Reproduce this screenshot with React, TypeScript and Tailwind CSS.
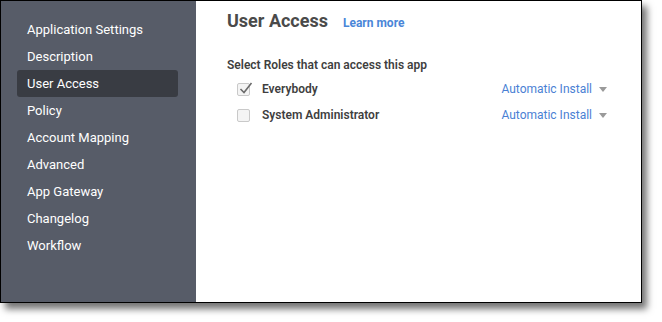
const items = [
  'Application Settings',
  'Description',
  'User Access',
  'Policy',
  'Account Mapping',
  'Advanced',
  'App Gateway',
  'Changelog',
  'Workflow',
];

const roles = [
  { name: 'Everybody', checked: true },
  { name: 'System Administrator', checked: false },
];

function Checkbox({ checked }: { checked: boolean }) {
  return (
    <span className="relative flex h-[13px] w-[13px] items-center justify-center rounded-[2px] border border-[#c9c9c9] bg-[#f4f4f4]">
      {checked && (
        <svg className="absolute -top-[3px] left-[1px]" width="14" height="14" viewBox="0 0 14 14">
          <path d="M1.5 8 L5 11.5 L12.5 2" fill="none" stroke="#6b6b6b" strokeWidth="1.6" />
        </svg>
      )}
    </span>
  );
}

export default function App() {
  return (
    <div className="h-[322px] w-[662px] bg-white" style={{ fontFamily: 'Roboto, "Liberation Sans", sans-serif' }}>
      <div className="flex h-[303px] w-[642px] border border-black shadow-[5px_6px_7px_rgba(0,0,0,0.55)]">
        <aside className="w-[195px] shrink-0 bg-[#575c68] pt-[15px]">
          <ul className="flex flex-col">
            {items.map((item) => (
              <li
                key={item}
                className={
                  'ml-[16px] mr-[18px] flex h-[27px] items-center rounded-[3px] pl-[10px] pt-[1px] text-[13px] text-white ' +
                  (item === 'User Access' ? 'bg-[#393c43]' : '')
                }
              >
                {item}
              </li>
            ))}
          </ul>
        </aside>
        <main className="flex-1 bg-white pl-[31px] pr-[34px] pt-[6px]">
          <div className="flex items-baseline gap-[15px]">
            <h1 className="text-[18px] font-bold text-[#4a4a4a]">User Access</h1>
            <a className="text-[12px] font-bold text-[#4a86d8]">Learn more</a>
          </div>
          <p className="mt-[22px] text-[12px] font-semibold text-[#3f3f3f]">Select Roles that can access this app</p>
          <div className="mt-[2px] flex flex-col">
            {roles.map((role) => (
              <div key={role.name} className="flex h-[26px] items-center">
                <span className="ml-[10px] mr-[12px]">
                  <Checkbox checked={role.checked} />
                </span>
                <span className="flex-1 text-[12px] font-semibold text-[#3f3f3f]">{role.name}</span>
                <span className="text-[12px] text-[#4a7fd4]">Automatic Install</span>
                <span className="ml-[7px] h-0 w-0 border-x-[4px] border-t-[5px] border-x-transparent border-t-[#9a9a9a]" />
              </div>
            ))}
          </div>
        </main>
      </div>
    </div>
  );
}
